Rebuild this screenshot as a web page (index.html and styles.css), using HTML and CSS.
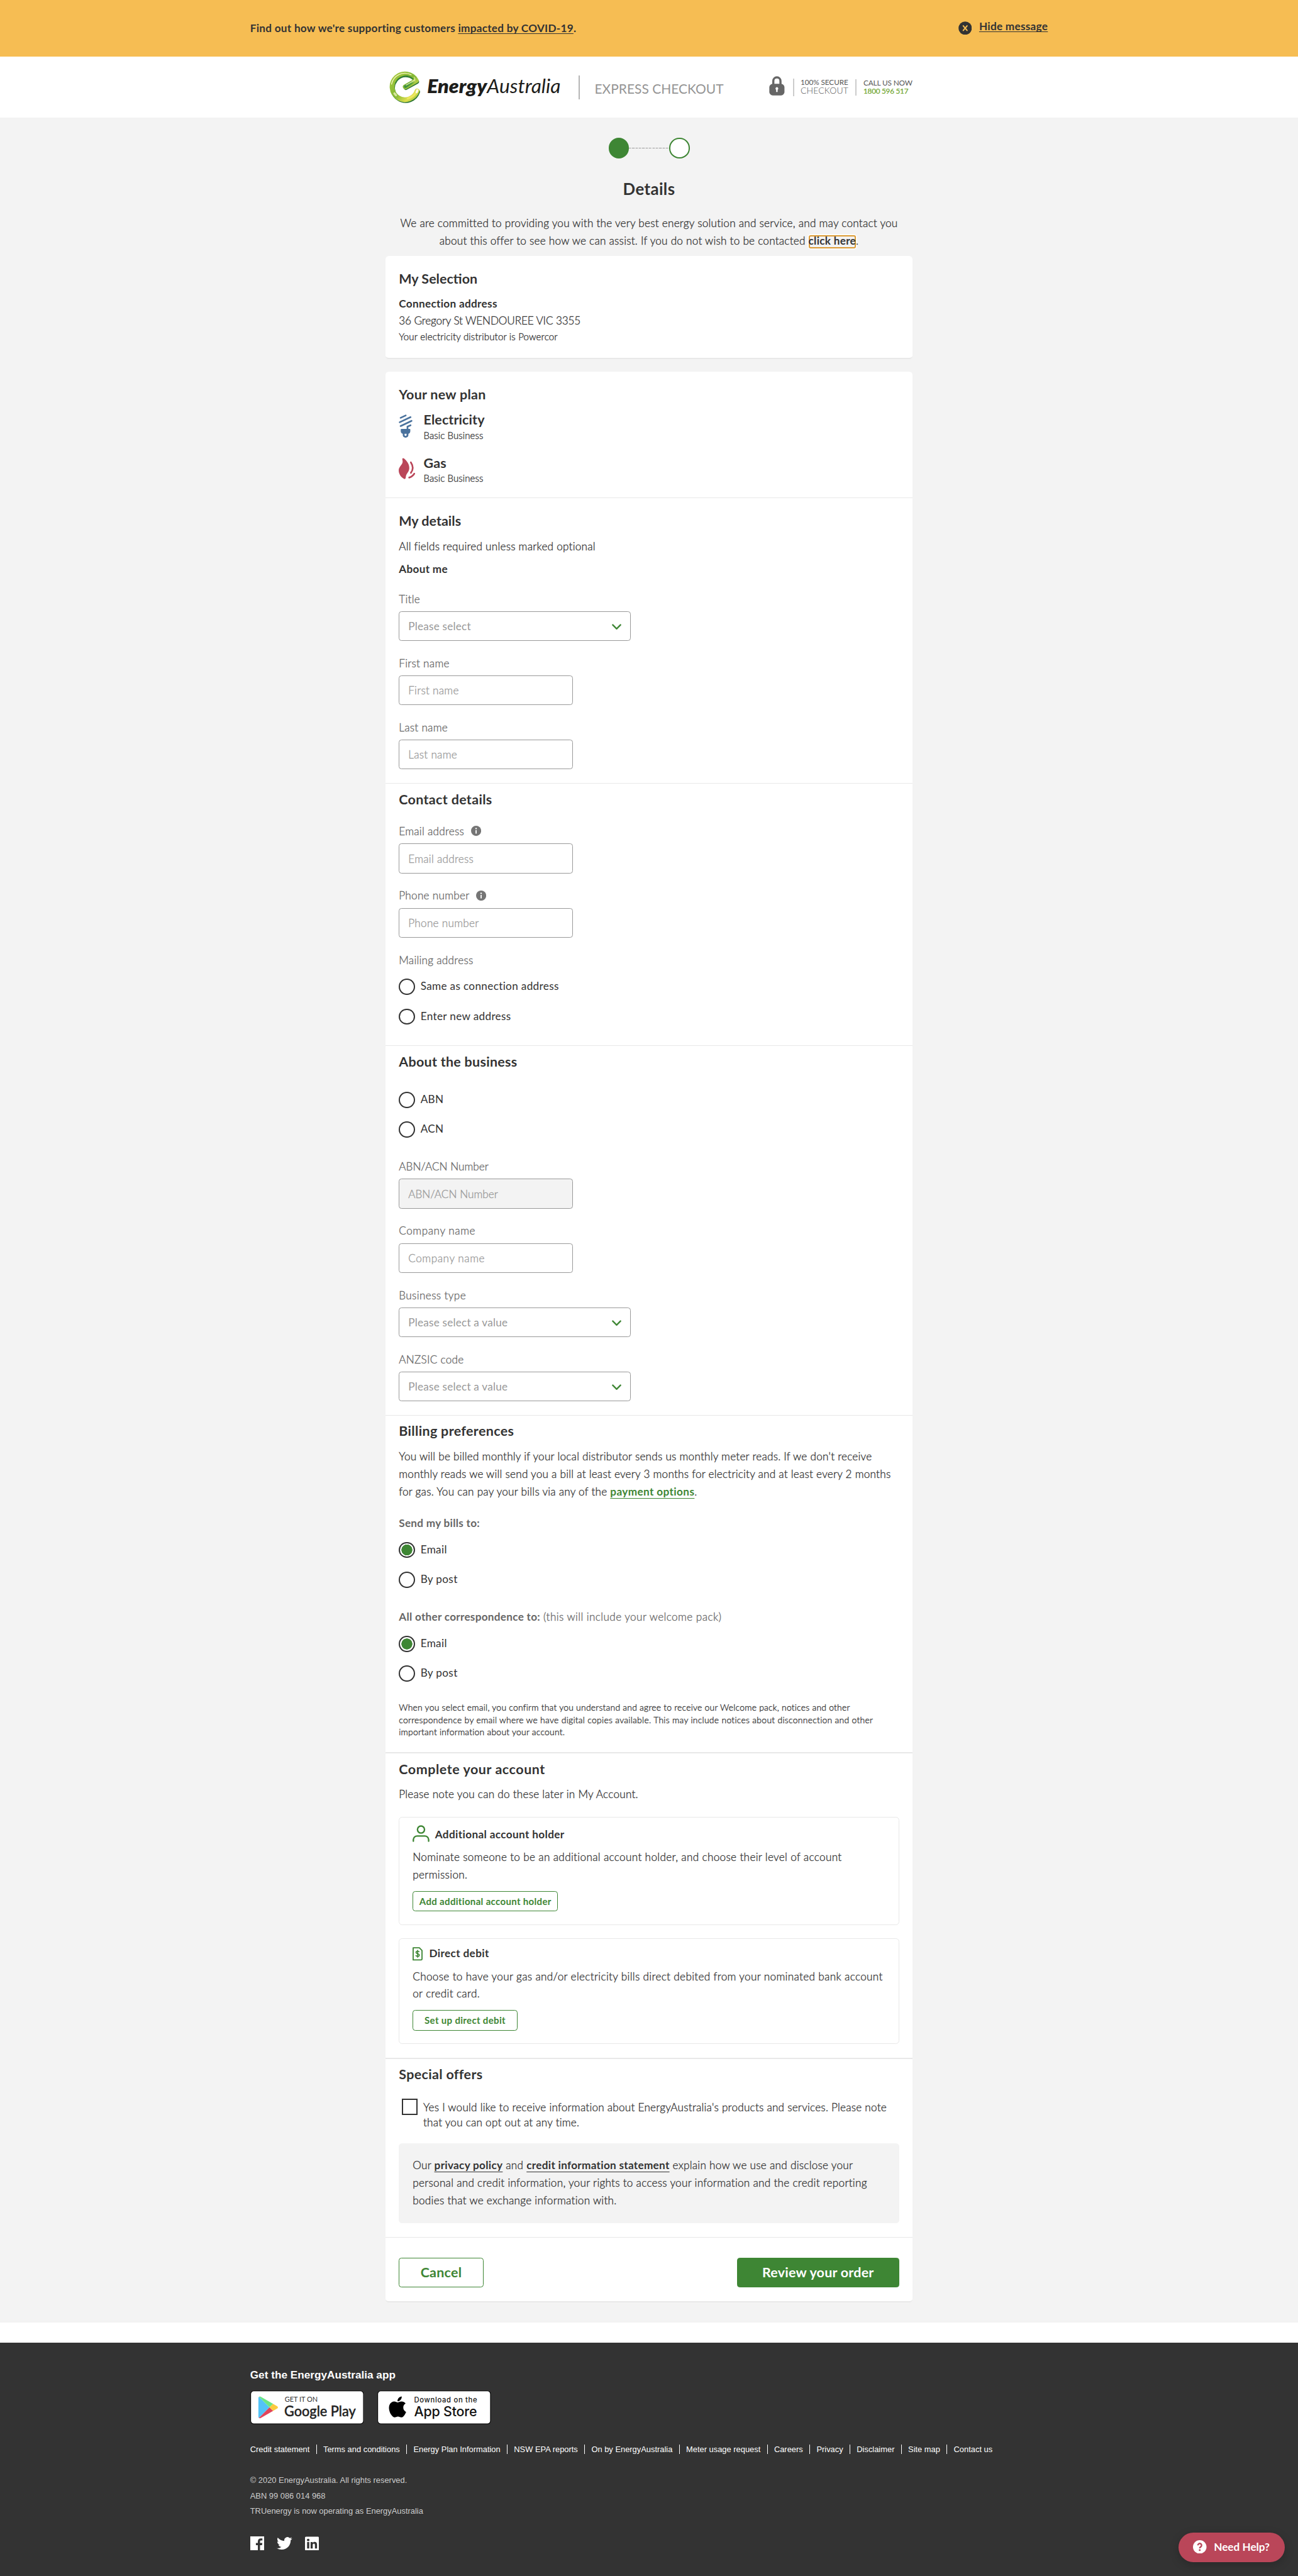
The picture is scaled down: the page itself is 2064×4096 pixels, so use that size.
FILE: index.html
```html
<!DOCTYPE html>
<html lang="en">
<head>
<meta charset="utf-8">
<title>Details | EnergyAustralia Express Checkout</title>
<link rel="stylesheet" href="styles.css">
</head>
<body>
<div class="banner">
  <div class="banner-inner">
    <p class="banner-text">Find out how we're supporting customers <a href="#">impacted by COVID-19</a>.</p>
    <a class="banner-hide" href="#">
      <svg width="20" height="20" viewBox="0 0 20 20"><circle cx="10" cy="10" r="9.8" fill="#333"/><path d="M7.2 6.6l5.6 6.8M12.8 6.6l-5.6 6.8" stroke="#f6bd53" stroke-width="1.9" stroke-linecap="round"/></svg>
      <span>Hide message</span>
    </a>
  </div>
</div>

<header class="header">
  <div class="header-inner">
    <svg class="logo" width="265" height="54" viewBox="0 0 265 54">
      <defs>
        <linearGradient id="ring" x1="0" y1="0" x2="1" y2="1"><stop offset="0" stop-color="#a6ca3c"/><stop offset=".5" stop-color="#83b735"/><stop offset=".8" stop-color="#dfe04e"/><stop offset="1" stop-color="#9cc63c"/></linearGradient>
        <linearGradient id="bar" x1="0" y1="1" x2="1" y2="0"><stop offset="0" stop-color="#3f9140"/><stop offset=".6" stop-color="#58a33a"/><stop offset="1" stop-color="#b9d451"/></linearGradient>
      </defs>
      <g transform="translate(-6 0) scale(.16667)" fill="none" stroke-linecap="round" stroke-linejoin="round">
        <path d="M290 218A114 114 0 1 1 281 128L184 182" stroke="#2c7434" stroke-width="38"/>
        <path d="M283 210A114 114 0 1 1 275 118L178 174" stroke="url(#ring)" stroke-width="43"/>
        <path d="M260 120L180 170" stroke="url(#bar)" stroke-width="27"/>
        <path d="M94 140A92 92 0 0 1 245 104" stroke="#2f7f37" stroke-width="9"/>
        <path d="M56 150A122 122 0 0 1 230 66" stroke="#f2f3bd" stroke-width="8"/>
        <path d="M256 88Q276 112 244 124L186 158" stroke="#eef2b4" stroke-width="6"/>
        <path d="M283 206Q262 262 200 276" stroke="#eee75e" stroke-width="18"/>
        <path d="M285 205L279 220" stroke="#fbfbe6" stroke-width="20"/>
        <path d="M82 232L95 248" stroke="#d5e59a" stroke-width="20"/>
      </g>
      <text class="logo-bold" x="56" y="38" textLength="88.5" lengthAdjust="spacingAndGlyphs">Energy</text>
      <text class="logo-light" x="144.5" y="38" textLength="109" lengthAdjust="spacingAndGlyphs">Australia</text>
    </svg>
    <i class="rule rule-lg"></i>
    <span class="express">EXPRESS CHECKOUT</span>
    <svg class="lock" width="23" height="29" viewBox="0 0 23 29"><path d="M6.2 13V7.2a5.3 5.3 0 0 1 10.6 0V13" fill="none" stroke="#666" stroke-width="3.2"/><rect x=".3" y="11.5" width="22.4" height="17" rx="5" fill="#666"/><path d="M11.5 16.2a2.2 2.2 0 0 1 1.1 4v3.3h-2.2v-3.3a2.2 2.2 0 0 1 1.1-4z" fill="#fff"/></svg>
    <i class="rule"></i>
    <svg class="secure" width="71" height="28" viewBox="0 0 71 28"><text x="0" y="11" font-size="10.9" font-weight="400" textLength="70.5">100% SECURE</text><text x="0" y="24" font-size="13" font-weight="300" textLength="70.5">CHECKOUT</text></svg>
    <i class="rule rule-sm"></i>
    <svg class="call" width="73" height="28" viewBox="0 0 73 28"><text x="0" y="12" font-size="11" font-weight="400" textLength="72.5">CALL US NOW</text><text class="call-num" x="0" y="24" font-size="10.9" font-weight="400" textLength="66.5">1800 596 517</text></svg>
  </div>
</header>

<main class="main">
  <div class="column">
    <div class="steps"><span class="step step-on"></span><span class="step-line"></span><span class="step"></span></div>
    <h1>Details</h1>
    <p class="intro">We are committed to providing you with the very best energy solution and service, and may contact you<br>about this offer to see how we can assist. If you do not wish to be contacted <a class="focused" href="#">click here</a>.</p>

    <section class="card selection">
      <h2>My Selection</h2>
      <h3>Connection address</h3>
      <p class="address">36 Gregory St WENDOUREE VIC 3355</p>
      <p class="small">Your electricity distributor is Powercor</p>
    </section>

    <div class="card">
      <section class="plan">
        <h2>Your new plan</h2>
        <div class="fuel">
          <svg width="21" height="35" viewBox="29 46 126 210" fill="none" stroke="#4a729d" stroke-width="15" stroke-linecap="round"><path d="M46 76L91 55M38 115L134 70M46 149L143 103M134 142L107 154V182"/><path d="M47 180q0-5 5-5h75q5 0 5 5v12q0 20-17 26v12a25 22 0 0 1-50 0v-12q-18-6-18-26zM81 218v10a9 9 0 0 0 18 0v-10z" fill="#4a729d" fill-rule="evenodd" stroke="none"/></svg>
          <div><h4>Electricity</h4><p>Basic Business</p></div>
        </div>
        <div class="fuel">
          <svg width="24.5" height="32" viewBox="29 430 147 192" fill="none" stroke="#ba4659" stroke-width="15" stroke-linecap="round"><path d="M137 470Q170 520 137 563M122 605Q150 598 167 571"/><path d="M62 436q6-7 14 0C98 454 123 482 123 520c0 38-28 46-31 80-1 14-6 20-14 17C52 604 29 575 29 541c0-34 35-50 35-78 0-12-5-20-2-27z" fill="#ba4659" stroke="none"/></svg>
          <div><h4>Gas</h4><p>Basic Business</p></div>
        </div>
      </section>

      <section class="my-details">
        <h2>My details</h2>
        <p class="body">All fields required unless marked optional</p>
        <h3>About me</h3>
        <div class="fields">
          <div class="field"><label>Title</label><div class="select"><span>Please select</span><svg width="14" height="9" viewBox="0 0 14 9"><path d="M1.3 1.5L7 7.3l5.7-5.8"/></svg></div></div>
          <div class="field"><label>First name</label><input type="text" placeholder="First name"></div>
          <div class="field"><label>Last name</label><input type="text" placeholder="Last name"></div>
        </div>
      </section>

      <section class="contact">
        <h2 class="w3">Contact details</h2>
        <div class="fields">
          <div class="field"><label>Email address <svg width="15" height="15" viewBox="0 0 15 15"><circle cx="7.5" cy="7.5" r="7.5" fill="#757575"/><path d="M7.5 6.6v5" stroke="#fff" stroke-width="1.7"/><circle cx="7.5" cy="4.1" r="1.1" fill="#fff"/></svg></label><input type="text" placeholder="Email address"></div>
          <div class="field"><label>Phone number <svg width="15" height="15" viewBox="0 0 15 15"><circle cx="7.5" cy="7.5" r="7.5" fill="#757575"/><path d="M7.5 6.6v5" stroke="#fff" stroke-width="1.7"/><circle cx="7.5" cy="4.1" r="1.1" fill="#fff"/></svg></label><input type="text" placeholder="Phone number"></div>
          <div><p class="label">Mailing address</p>
            <div class="radios">
              <label class="radio"><input type="radio" name="mail"><span>Same as connection address</span></label>
              <label class="radio"><input type="radio" name="mail"><span>Enter new address</span></label>
            </div>
          </div>
        </div>
      </section>

      <section class="business">
        <h2>About the business</h2>
        <div class="radios">
          <label class="radio"><input type="radio" name="reg"><span>ABN</span></label>
          <label class="radio"><input type="radio" name="reg"><span>ACN</span></label>
        </div>
        <div class="fields">
          <div class="field"><label class="caps">ABN/ACN Number</label><input class="caps" type="text" placeholder="ABN/ACN Number" disabled></div>
          <div class="field"><label class="loose">Company name</label><input class="loose" type="text" placeholder="Company name"></div>
          <div class="field"><label class="loose2">Business type</label><div class="select"><span>Please select a value</span><svg width="14" height="9" viewBox="0 0 14 9"><path d="M1.3 1.5L7 7.3l5.7-5.8"/></svg></div></div>
          <div class="field"><label>ANZSIC code</label><div class="select"><span>Please select a value</span><svg width="14" height="9" viewBox="0 0 14 9"><path d="M1.3 1.5L7 7.3l5.7-5.8"/></svg></div></div>
        </div>
      </section>

      <section class="billing">
        <h2 class="w3">Billing preferences</h2>
        <p class="body">You will be billed monthly if your local distributor sends us monthly meter reads. If we don't receive<br>monthly reads we will send you a bill at least every 3 months for electricity and at least every 2 months<br>for gas. You can pay your bills via any of the <a class="green-link" href="#">payment options</a>.</p>
        <p class="label send"><b>Send my bills to:</b></p>
        <div class="radios">
          <label class="radio"><input type="radio" name="bills" checked><span>Email</span></label>
          <label class="radio"><input type="radio" name="bills"><span>By post</span></label>
        </div>
        <p class="label other"><b>All other correspondence to:</b> (this will include your welcome pack)</p>
        <div class="radios">
          <label class="radio"><input type="radio" name="other" checked><span>Email</span></label>
          <label class="radio"><input type="radio" name="other"><span>By post</span></label>
        </div>
        <p class="fine">When you select email, you confirm that you understand and agree to receive our Welcome pack, notices and other<br><span class="loose-line">correspondence by email where we have digital copies available. This may include notices about disconnection and other</span><br>important information about your account.</p>
      </section>

      <section class="complete">
        <h2 class="w5">Complete your account</h2>
        <p class="body">Please note you can do these later in My Account.</p>
        <div class="box box-holder">
          <div class="box-head">
            <svg width="25" height="25" viewBox="0 0 25 25" fill="none" stroke="#3e8634" stroke-width="2.2" stroke-linecap="round"><circle cx="12.5" cy="6.6" r="5.2"/><path d="M1.2 23.8v-2.3a5.6 5.6 0 0 1 5.6-5.4h11.4a5.6 5.6 0 0 1 5.6 5.4v2.3"/></svg>
            <h3>Additional account holder</h3>
          </div>
          <p class="body">Nominate someone to be an additional account holder, and choose their level of account<br>permission.</p>
          <button class="btn-sm btn-holder">Add additional account holder</button>
        </div>
        <div class="box box-debit">
          <div class="box-head">
            <svg width="15" height="20" viewBox="0 0 15 20" fill="none" stroke="#3e8634" stroke-width="1.7"><path d="M.9 1h9.2l3.9 4v12.6a1.4 1.4 0 0 1-1.4 1.4H.9z" stroke-linejoin="round"/><path d="M10 7.3C9.6 6.4 8.700 6 7.500 6 6 6 5.100 6.700 5.100 7.800c0 2.600 4.900 1.300 4.900 4 0 1.200-1 1.900-2.500 1.900-1.400 0-2.400-.5-2.700-1.600M7.500 4.300v11.300" stroke-width="1.500"/></svg>
            <h3>Direct debit</h3>
          </div>
          <p class="body">Choose to have your gas and/or electricity bills direct debited from your nominated bank account<br>or credit card.</p>
          <button class="btn-sm btn-debit">Set up direct debit</button>
        </div>
      </section>

      <section class="offers">
        <h2 class="w3">Special offers</h2>
        <label class="check"><input type="checkbox"><span>Yes I would like to receive information about EnergyAustralia's products and services. Please note<br>that you can opt out at any time.</span></label>
        <div class="policy">Our <a href="#">privacy policy</a> and <a href="#">credit information statement</a> explain how we use and disclose your<br>personal and credit information, your rights to access your information and the credit reporting<br>bodies that we exchange information with.</div>
      </section>

      <div class="actions"><button class="btn btn-cancel">Cancel</button><button class="btn btn-review">Review your order</button></div>
    </div>
  </div>
</main>

<footer class="footer">
  <div class="footer-inner">
    <h5>Get the EnergyAustralia app</h5>
    <div class="badges">
      <svg width="168" height="50" viewBox="0 0 168.5 50">
        <rect x=".6" y=".6" width="167.3" height="48.8" rx="4.5" fill="#fff" stroke="#000" stroke-width="1"/>
        <path d="M12.8 9.2L28.5 25 12.8 40.8q-.8-.7-.8-2V11.2q0-1.3.8-2z" fill="#53c3f8"/>
        <path d="M12.8 9.2q1.2-.9 2.8 0L33.8 19.7 28.5 25z" fill="#6be685"/>
        <path d="M12.8 40.8q1.2.9 2.8 0L33.8 30.3 28.5 25z" fill="#e2445a"/>
        <path d="M33.8 19.7l6 3.5q2.4 1.8 0 3.6l-6 3.5L28.5 25z" fill="#fbca3e"/>
        <text class="badge-cap" x="51" y="16.5" font-size="10.5" textLength="49" lengthAdjust="spacingAndGlyphs">GET IT ON</text>
        <text class="badge-gp" x="50.5" y="38" font-size="22" textLength="106" lengthAdjust="spacingAndGlyphs">Google Play</text>
      </svg>
      <svg width="168" height="50" viewBox="0 0 168.5 50">
        <rect x=".6" y=".6" width="167.3" height="48.8" rx="4.5" fill="#fff" stroke="#000" stroke-width="1"/>
        <path transform="translate(14.4 8.7) scale(1.3)" d="M12.152 6.896c-.948 0-2.415-1.078-3.960-1.040-2.040.027-3.910 1.183-4.961 3.014-2.117 3.675-.546 9.103 1.519 12.090 1.013 1.454 2.208 3.090 3.792 3.039 1.520-.065 2.090-.987 3.935-.987 1.831 0 2.350.987 3.960.948 1.637-.026 2.676-1.480 3.676-2.948 1.156-1.688 1.636-3.325 1.662-3.415-.039-.013-3.182-1.221-3.220-4.857-.026-3.040 2.480-4.494 2.597-4.559-1.429-2.090-3.623-2.324-4.390-2.376-2-.156-3.675 1.090-4.610 1.090zM15.530 3.830c.843-1.012 1.400-2.427 1.245-3.830-1.207.052-2.662.805-3.532 1.818-.780.896-1.454 2.338-1.273 3.714 1.338.104 2.715-.688 3.559-1.701"/>
        <text class="badge-as" x="54.5" y="17.5" font-size="10.5" textLength="93.5">Download on the</text>
        <text class="badge-as" x="54.5" y="38" font-size="20" textLength="93.5">App Store</text>
      </svg>
    </div>
    <nav class="links"><a>Credit statement</a><a>Terms and conditions</a><a>Energy Plan Information</a><a>NSW EPA reports</a><a>On by EnergyAustralia</a><a>Meter usage request</a><a>Careers</a><a>Privacy</a><a>Disclaimer</a><a>Site map</a><a>Contact us</a></nav>
    <div class="legal"><p>© 2020 EnergyAustralia. All rights reserved.</p><p>ABN 99 086 014 968</p><p>TRUenergy is now operating as EnergyAustralia</p></div>
    <div class="social">
      <svg width="21" height="21" viewBox="0 0 21 21"><path d="M0 0h21v21h-6.600v-8h2.900l.5-3.300h-3.400V7.700c0-1 .5-1.600 1.700-1.600h1.800V3.100C17.400 3 16.600 3 15.700 3c-2.800 0-4.500 1.600-4.500 4.500v2.200H8.300V13h2.900v8H0z" fill="#fff"/></svg>
      <svg width="23" height="21" viewBox="0 2.2 24 20"><path fill="#fff" d="M23.953 4.570a10 10 0 01-2.825.775 4.958 4.958 0 002.163-2.723c-.951.555-2.005.959-3.127 1.184a4.920 4.920 0 00-8.384 4.482C7.690 8.095 4.067 6.130 1.640 3.162a4.822 4.822 0 00-.666 2.475c0 1.710.870 3.213 2.188 4.096a4.904 4.904 0 01-2.228-.616v.060a4.923 4.923 0 003.946 4.827 4.996 4.996 0 01-2.212.085 4.936 4.936 0 004.604 3.417 9.867 9.867 0 01-6.102 2.105c-.390 0-.779-.023-1.170-.067a13.995 13.995 0 007.557 2.209c9.053 0 13.998-7.496 13.998-13.985 0-.210 0-.420-.015-.630A9.935 9.935 0 0024 4.590z"/></svg>
      <svg width="21" height="21" viewBox="0 0 21 21"><rect y=".4" width="20.5" height="20.5" rx="1.5" fill="#fff"/><g fill="#333"><circle cx="4.7" cy="5.4" r="1.9"/><path d="M3.1 8.4h3.2V18H3.1zM8.300 8.400h3v1.300c.6-1 1.700-1.600 3-1.600 2.700 0 3.500 1.700 3.500 4.300V18h-3.100v-5c0-1.300-.3-2.300-1.600-2.300s-1.700 1-1.700 2.300v5H8.300z"/></g></svg>
    </div>
  </div>
</footer>

<a class="help" href="#">
  <svg width="20" height="20" viewBox="0 0 20 20"><circle cx="10" cy="10" r="10" fill="#fff"/><path d="M7.3 7.6a2.7 2.7 0 1 1 4.3 2.2c-1 .7-1.6 1.1-1.6 2.2" fill="none" stroke="#ba4659" stroke-width="2.2"/><circle cx="10" cy="14.7" r="1.4" fill="#ba4659"/></svg>
  <span>Need Help?</span>
</a>
</body>
</html>
```
FILE: styles.css
```css
html { background: #333; }

* { box-sizing: border-box; }

body {
  position: relative;
  width: 1920px;
  margin: 0;
  zoom: 1.075;
  background: #fff;
  color: #333;
  font: 300 16px/20px Lato, "Open Sans", sans-serif;
  letter-spacing: .21px;
  -webkit-text-stroke: .3px;
}

h1, h2, h3, h4, h5, p { margin: 0; }
a { color: inherit; }
svg { display: block; flex: none; }
b { font-weight: 700; }
input, button { font: inherit; letter-spacing: inherit; margin: 0; }
h1, h2, h3, h4, b, a, button, .banner, .header, .footer, .radio, .select { -webkit-text-stroke: 0; }

/* COVID banner */
.banner { height: 84px; background: #f6bd53; }
.banner-inner {
  display: flex;
  justify-content: space-between;
  align-items: flex-start;
  width: 1180px;
  margin: 0 auto;
}
.banner-text { margin-top: 32px; font-weight: 700; letter-spacing: .24px; }
.banner-text a, .banner-hide span {
  text-decoration: underline;
  text-decoration-thickness: 1.3px;
  text-underline-offset: 2px;
  text-decoration-skip-ink: none;
}
.banner-hide { display: flex; gap: 11px; margin-top: 29px; font-weight: 700; letter-spacing: .25px; text-decoration: none; }
.banner-hide svg { margin-top: 2.5px; }

/* Site header */
.header { height: 90px; background: #fff; }
.header-inner { display: flex; align-items: flex-start; width: 780px; margin: 0 auto; }
.logo { margin: 16px 0 0 6px; }
.logo-bold { font: italic 800 28px Lato, sans-serif; fill: #1d1d1b; letter-spacing: 0; }
.logo-light { font: italic 400 28px Lato, sans-serif; fill: #1d1d1b; letter-spacing: 0; }
.rule { flex: none; width: 1.5px; height: 26px; margin-top: 32px; background: #ccc; }
.rule-lg { height: 35px; margin: 28px 0 0 15px; background: #b5b5b5; }
.rule-sm { height: 24px; margin: 33px 0 0 10px; }
.express { width: 192px; margin: 35px 0 0 22px; font-size: 19.5px; line-height: 24px; font-weight: 400; color: #959595; letter-spacing: .02px; white-space: nowrap; }
.lock { margin: 29px 0 0 67px; }
.lock + .rule { margin-left: 12.5px; }
.secure { margin: 30px 0 0 10px; fill: #555; letter-spacing: 0; }
.call { margin: 30px 0 0 10px; fill: #555; letter-spacing: 0; }
.call-num { fill: #6fa52d; stroke: #6fa52d; stroke-width: .2px; }

/* Page body */
.main { height: 3261px; padding-top: 30px; background: #f3f3f3; }
.column { width: 780px; margin: 0 auto; }
.steps { display: flex; justify-content: center; align-items: center; }
.step { width: 30px; height: 30px; border: 2px solid #3e8634; border-radius: 50%; background: #fff; }
.step-on { background: #3e8634; }
.step-line { width: 60px; height: 1px; background: repeating-linear-gradient(90deg, #999 0 3px, #d8d8d8 3px 5px); }
h1 { margin-top: 31px; font-size: 24px; line-height: 28px; font-weight: 700; letter-spacing: .36px; text-align: center; }
.intro { margin-top: 24px; line-height: 26px; text-align: center; }
.focused {
  display: inline-block;
  height: 20px;
  padding-bottom: 3px;
  line-height: 17px;
  font-weight: 700;
  letter-spacing: .25px;
  text-decoration: none;
  border-radius: 3px;
  box-shadow: inset 0 0 0 1.8px #dc9a33, 0 0 0 1.5px #fff;
}

.card { background: #fff; border-radius: 5px; border-bottom: 2px solid #e8e8e8; }
.card section { padding-left: 20px; padding-right: 20px; border-bottom: 1px solid #e8e8e8; }
.card h2 { padding-top: 2px; margin-bottom: -2px; font-size: 20px; line-height: 24px; font-weight: 700; letter-spacing: 0; }
.card .plan h2, .card .business h2 { letter-spacing: .25px; }
.card .w3 { letter-spacing: .3px; }
.card .w5 { letter-spacing: .5px; }
.card h3 { padding-top: 1px; margin-bottom: -1px; font-size: 16px; line-height: 20px; font-weight: 700; letter-spacing: .28px; }
.body { margin-top: 13px; padding-top: 1px; margin-bottom: -1px; line-height: 26px; }

.card.selection { height: 152px; margin-top: 10px; padding: 20px; border-bottom: 2px solid #e8e8e8; }
.selection h3 { margin-top: 15px; }
.address { margin-top: 6px; letter-spacing: -.14px; }
.small { margin-top: 5px; font-size: 14px; line-height: 18px; letter-spacing: .15px; }

.selection + .card { margin-top: 19px; }
.plan { height: 187px; padding-top: 20px; }
.fuel { display: grid; grid-template-columns: 36.5px auto; align-items: start; height: 44px; margin-top: 14px; }
.fuel + .fuel { margin-top: 20px; }
.fuel svg { margin-top: 5px; }
.fuel h4 { padding-top: 1.5px; font-size: 20px; line-height: 24px; font-weight: 700; letter-spacing: .08px; }
.fuel p { margin-top: 1.5px; font-size: 14px; line-height: 18px; letter-spacing: .07px; }

/* Form controls */
.fields { display: flex; flex-direction: column; gap: 22px; }
.field label, .label { display: flex; align-items: center; gap: 5.5px; height: 20px; padding-top: 2px; color: #666; letter-spacing: .24px; white-space: pre; }
.field label svg { margin-top: -1px; }
.field input, .select {
  display: flex;
  align-items: center;
  width: 257px;
  height: 44px;
  margin-top: 9px;
  padding: 0 13px;
  border: 1px solid #999;
  border-radius: 4px;
  background: #fff;
  color: #999;
  letter-spacing: .24px;
}
.field input:disabled { background: #f3f3f3; }
.field input::placeholder { color: #999; opacity: 1; }
.field .caps { letter-spacing: 0; }
.field .loose { letter-spacing: .5px; }
.field .loose2 { letter-spacing: .35px; }
.select { justify-content: space-between; width: 343px; font-weight: 400; letter-spacing: .19px; }
.select svg { margin-top: 2px; fill: none; stroke: #3e8634; stroke-width: 2.2; stroke-linecap: round; }
.label { gap: 0; }
.label b { letter-spacing: .25px; }

.radios { display: flex; flex-direction: column; gap: 20px; margin-top: 19px; }
.radio { display: flex; gap: 8px; height: 24px; line-height: 23px; font-weight: 400; letter-spacing: .3px; }
.radio input { appearance: none; flex: none; width: 24px; height: 24px; border: 2px solid #333; border-radius: 50%; background: #fff; }
.radio input:checked { background: radial-gradient(circle, #3e8634 0 7.8px, #fff 8.3px); }

.my-details { padding-top: 20px; padding-bottom: 20px; }
.my-details h3 { margin-top: 11px; margin-bottom: 23px; }
.contact { padding-top: 10px; padding-bottom: 30px; }
.contact .fields { margin-top: 26px; }
.business { padding-top: 10px; padding-bottom: 20px; }
.business .radios { margin-top: 34px; }
.business .fields { margin-top: 32px; }

.card .billing { padding-top: 10px; padding-bottom: 21px; border-bottom-width: 2px; }
.green-link { color: #3e8634; font-weight: 700; letter-spacing: .35px; }
.green-link, .policy a { text-decoration: underline; text-decoration-thickness: 1.3px; text-underline-offset: 3.5px; text-decoration-skip-ink: none; }
.send { margin-top: 23px; }
.other { margin-top: 32px; letter-spacing: .38px; }
.fine { margin-top: 29px; font-size: 13px; line-height: 18px; letter-spacing: .2px; white-space: nowrap; }
.loose-line { letter-spacing: .25px; }

.card .complete { padding-top: 10px; padding-bottom: 20px; border-bottom-width: 2px; }
.box { margin-top: 20px; padding: 12px 19.5px; border: 1px solid #e8e8e8; border-radius: 5px; }
.box-holder { height: 160px; margin-top: 21px; }
.box-debit { height: 156px; }
.box-head { display: flex; align-items: center; gap: 8px; height: 24px; }
.box-debit .box-head { align-items: flex-start; gap: 9.5px; height: 20px; }
.card .box-head h3 { letter-spacing: .33px; }
.card .box-debit h3 { line-height: 16px; }
.box .body { margin-top: 9px; letter-spacing: .3px; white-space: nowrap; }
.btn-sm { display: block; height: 30px; margin-top: 12px; padding: 1px 0 0; border: 1.3px solid #3e8634; border-radius: 4px; background: #fff; color: #3e8634; font-size: 14px; line-height: 20px; font-weight: 700; letter-spacing: .29px; }
.btn-holder { width: 215px; }
.btn-debit { width: 155px; }

.card .offers { padding-top: 10px; padding-bottom: 20px; }
.check { display: flex; gap: 8px; height: 45px; margin: 25px 0 0 4px; }
.check input { appearance: none; flex: none; width: 24px; height: 24px; border: 2px solid #333; background: #fff; }
.check span { margin-top: 2px; line-height: 22px; white-space: nowrap; letter-spacing: .2px; }
.policy { height: 118.5px; margin-top: 21px; padding: 20px 20.5px; border-radius: 5px; background: #f3f3f3; line-height: 26px; letter-spacing: .24px; white-space: nowrap; }
.policy a { font-weight: 700; letter-spacing: .26px; }

.actions { display: flex; justify-content: space-between; padding: 30px 20px 20px; }
.btn { height: 44px; padding: 0; border: 1.3px solid #3e8634; border-radius: 4px; font-size: 20px; font-weight: 700; letter-spacing: .2px; }
.btn-cancel { width: 125px; background: #fff; color: #3e8634; }
.btn-review { width: 240px; background: #3e8634; color: #fff; }

/* Footer */
.footer { height: 345px; margin-top: 30px; padding-top: 37.5px; background: #333; color: #fff; font-family: "Liberation Sans", Arial, sans-serif; font-weight: 400; letter-spacing: 0; }
.footer-inner { width: 1180px; margin: 0 auto; }
.footer h5 { padding-top: 1px; margin-bottom: -1px; font-size: 16px; line-height: 20px; font-weight: 700; }
.badges { display: flex; gap: 20.5px; margin-top: 13.5px; }
.badge-cap { font-family: Lato, sans-serif; font-weight: 400; fill: #333; }
.badge-gp { font-family: Lato, sans-serif; font-weight: 500; fill: #222; stroke: #222; stroke-width: .4px; }
.badge-as { font-family: Inter, sans-serif; font-weight: 500; fill: #111; }
.links { display: flex; margin-top: 30px; font-size: 12px; line-height: 14px; white-space: nowrap; }
.links a { padding: 0 9.6px; border-left: 1px solid #fff; }
.links a:first-child { padding-left: 0; border-left: 0; }
.legal { margin-top: 27.5px; font-size: 12px; line-height: 23px; color: #ccc; }
.social { display: flex; gap: 18.5px; margin-top: 25px; }

.help {
  position: absolute;
  right: 20px;
  bottom: 20px;
  display: flex;
  align-items: center;
  gap: 10.5px;
  width: 157px;
  height: 44px;
  padding: 0 0 2px 22px;
  border-radius: 22px;
  background: #ba4659;
  color: #fff;
  font-weight: 700;
  letter-spacing: 0;
  text-decoration: none;
  box-shadow: 0 4px 14px rgba(0, 0, 0, .2);
}
.help span { padding-top: 1px; }
```
